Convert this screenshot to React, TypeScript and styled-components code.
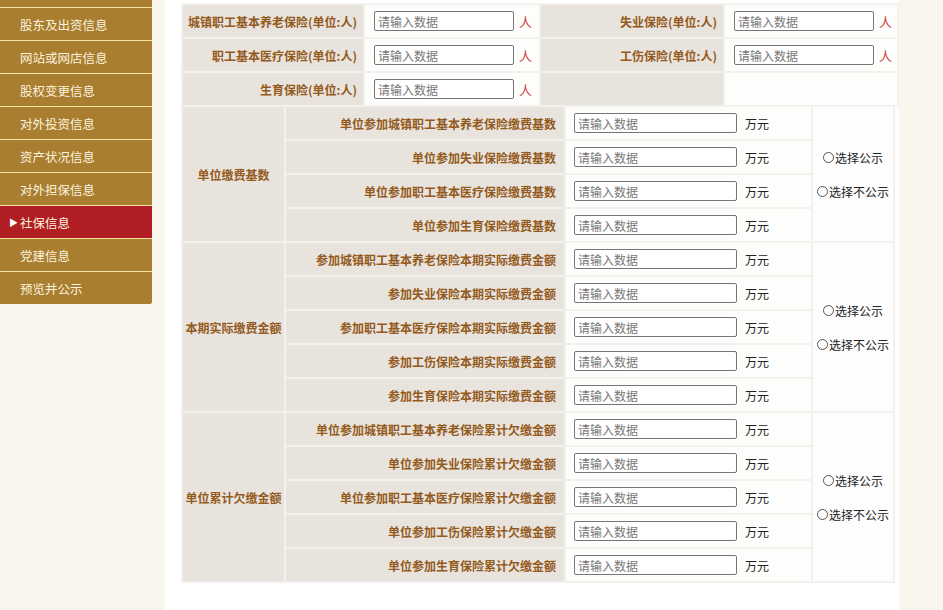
import { FC } from "react";
import styled, { createGlobalStyle } from "styled-components";

interface NavItem {
  name: string;
  active?: boolean;
}

interface CountField {
  label: string;
}

interface MoneyGroup {
  title: string;
  items: string[];
}

const navItems: NavItem[] = [
  { name: "股东及出资信息" },
  { name: "网站或网店信息" },
  { name: "股权变更信息" },
  { name: "对外投资信息" },
  { name: "资产状况信息" },
  { name: "对外担保信息" },
  { name: "社保信息", active: true },
  { name: "党建信息" },
  { name: "预览并公示" },
];

const countRows: (CountField | null)[][] = [
  [{ label: "城镇职工基本养老保险(单位:人)" }, { label: "失业保险(单位:人)" }],
  [{ label: "职工基本医疗保险(单位:人)" }, { label: "工伤保险(单位:人)" }],
  [{ label: "生育保险(单位:人)" }, null],
];

const moneyGroups: MoneyGroup[] = [
  {
    title: "单位缴费基数",
    items: [
      "单位参加城镇职工基本养老保险缴费基数",
      "单位参加失业保险缴费基数",
      "单位参加职工基本医疗保险缴费基数",
      "单位参加生育保险缴费基数",
    ],
  },
  {
    title: "本期实际缴费金额",
    items: [
      "参加城镇职工基本养老保险本期实际缴费金额",
      "参加失业保险本期实际缴费金额",
      "参加职工基本医疗保险本期实际缴费金额",
      "参加工伤保险本期实际缴费金额",
      "参加生育保险本期实际缴费金额",
    ],
  },
  {
    title: "单位累计欠缴金额",
    items: [
      "单位参加城镇职工基本养老保险累计欠缴金额",
      "单位参加失业保险累计欠缴金额",
      "单位参加职工基本医疗保险累计欠缴金额",
      "单位参加工伤保险累计欠缴金额",
      "单位参加生育保险累计欠缴金额",
    ],
  },
];

const Sidebar: FC<{ items: NavItem[] }> = ({ items }) => (
  <Nav>
    <NavTail />
    {items.map((item, k) => (
      <NavLink key={k} $active={item.active}>
        {item.active && <Arrow>▶</Arrow>}
        {item.name}
      </NavLink>
    ))}
  </Nav>
);

const CountTable: FC = () => (
  <Table $width={718}>
    <colgroup>
      <col style={{ width: 180 }} />
      <col style={{ width: 174 }} />
      <col style={{ width: 182 }} />
      <col style={{ width: 172 }} />
    </colgroup>
    <tbody>
      {countRows.map((row, r) => (
        <tr key={r}>
          {row.map((field, c) =>
            field
              ? [
                  <LabelCell key={`l${c}`} $pad={6}>
                    {field.label}
                  </LabelCell>,
                  <ValueCell key={`v${c}`} $pad={9}>
                    <Input placeholder="请输入数据" />
                    <PersonUnit>人</PersonUnit>
                  </ValueCell>,
                ]
              : [<LabelCell key={`l${c}`} $pad={6} />, <ValueCell key={`v${c}`} $pad={9} />]
          )}
        </tr>
      ))}
    </tbody>
  </Table>
);

const MoneyTable: FC = () => (
  <LowerTable $width={714}>
    <colgroup>
      <col style={{ width: 101 }} />
      <col style={{ width: 278 }} />
      <col style={{ width: 245 }} />
      <col style={{ width: 80 }} />
    </colgroup>
    <tbody>
      {moneyGroups.map((group) =>
        group.items.map((item, i) => (
          <tr key={item}>
            {i === 0 && (
              <LabelCell rowSpan={group.items.length} $align="center">
                {group.title}
              </LabelCell>
            )}
            <LabelCell $pad={8}>{item}</LabelCell>
            <ValueCell $pad={8}>
              <Input placeholder="请输入数据" $wide />
              <MoneyUnit>万元</MoneyUnit>
            </ValueCell>
            {i === 0 && (
              <RadioCell rowSpan={group.items.length}>
                <RadioStack>
                  <RadioOption>
                    <Circle />
                    选择公示
                  </RadioOption>
                  <RadioOption>
                    <Circle />
                    选择不公示
                  </RadioOption>
                </RadioStack>
              </RadioCell>
            )}
          </tr>
        ))
      )}
    </tbody>
  </LowerTable>
);

const App: FC = () => (
  <>
    <GlobalStyle />
    <Page>
      <Sidebar items={navItems} />
      <Main>
        <CountTable />
        <MoneyTable />
      </Main>
    </Page>
  </>
);

const GlobalStyle = createGlobalStyle`
  html, body {
    margin: 0;
    padding: 0;
    background: #f9f6ee;
  }
  body {
    font-family: "Noto Sans CJK SC", "Noto Sans", sans-serif;
    font-size: 12px;
  }
`;

const Page = styled.div`
  display: flex;
  align-items: flex-start;
  gap: 13px;
  min-height: 100vh;
`;

const Nav = styled.nav`
  width: 152px;
  flex-shrink: 0;
  background: #a97e30;
  border-bottom-right-radius: 3px;
  overflow: hidden;
`;

const NavTail = styled.div`
  height: 7px;
  border-bottom: 1px solid #f5e6a6;
`;

const NavLink = styled.div<{ $active?: boolean }>`
  display: flex;
  align-items: center;
  height: 32px;
  padding-left: ${({ $active }) => ($active ? 9 : 20)}px;
  background: ${({ $active }) => ($active ? "#b01d22" : "#a97e30")};
  color: #fbf3de;
  font-size: 12.5px;
  border-bottom: 1px solid #f5e6a6;
  &:last-child {
    border-bottom: none;
  }
`;

const Arrow = styled.span`
  display: inline-block;
  width: 11px;
  font-size: 9px;
  color: #ffffff;
`;

const Main = styled.main`
  width: 734px;
  min-height: 100vh;
  box-sizing: border-box;
  padding: 3px 0 0 16px;
  background: #ffffff;
`;

const Table = styled.table<{ $width: number }>`
  width: ${({ $width }) => $width}px;
  table-layout: fixed;
  border-collapse: separate;
  border-spacing: 2px;
  background: #f3f1ee;
`;

const LowerTable = styled(Table)`
  margin-top: -2px;
`;

const LabelCell = styled.td<{ $pad?: number; $align?: "right" | "center" }>`
  height: 32px;
  padding: 0 ${({ $pad }) => $pad ?? 0}px 0 0;
  background: #e8e3dc;
  color: #935a1c;
  font-weight: bold;
  font-size: 12px;
  text-align: ${({ $align }) => $align ?? "right"};
  white-space: nowrap;
`;

const ValueCell = styled.td<{ $pad: number }>`
  height: 32px;
  padding: 0 0 0 ${({ $pad }) => $pad}px;
  background: #fdfdfc;
  white-space: nowrap;
`;

const Input = styled.input<{ $wide?: boolean }>`
  width: ${({ $wide }) => ($wide ? 163 : 140)}px;
  height: 20px;
  box-sizing: border-box;
  padding: 0 3px;
  border: 1px solid #767676;
  border-radius: 2px;
  background: #ffffff;
  font-family: inherit;
  font-size: 12px;
  vertical-align: middle;
  &::placeholder {
    color: #777777;
  }
`;

const PersonUnit = styled.span`
  margin-left: 5px;
  color: #d33b3b;
  font-size: 13px;
  vertical-align: middle;
`;

const MoneyUnit = styled.span`
  margin-left: 8px;
  color: #222222;
  font-size: 12px;
  vertical-align: middle;
`;

const RadioCell = styled.td`
  padding: 0;
  background: #fdfdfd;
  text-align: center;
`;

const RadioStack = styled.div`
  display: flex;
  flex-direction: column;
  align-items: center;
  gap: 16px;
`;

const RadioOption = styled.label`
  display: flex;
  align-items: center;
  height: 18px;
  color: #222222;
  font-size: 12px;
`;

const Circle = styled.span`
  display: inline-block;
  width: 9px;
  height: 9px;
  margin-right: 1px;
  border: 1px solid #555555;
  border-radius: 50%;
`;

export default App;
